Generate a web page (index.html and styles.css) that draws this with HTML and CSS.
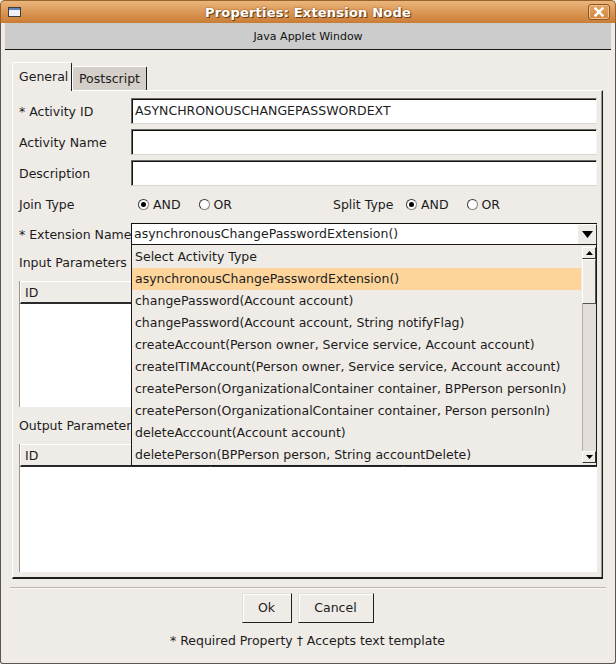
FILE: index.html
```html
<!DOCTYPE html>
<html>
<head>
<meta charset="utf-8">
<title>Properties: Extension Node</title>
<link rel="stylesheet" href="styles.css">
</head>
<body>
<div class="window">
  <div class="titlebar">
    <div class="tb-side tb-left"><span class="win-icon"></span></div>
    <div class="title">Properties: Extension Node</div>
    <div class="tb-side tb-right">
      <span class="close-btn">
        <svg width="10" height="10" viewBox="0 0 10 10"><path d="M1.5 1.5 L8.5 8.5 M8.5 1.5 L1.5 8.5" stroke="#fff" stroke-width="2.4" stroke-linecap="square"/></svg>
      </span>
    </div>
  </div>
  <div class="frame">
    <div class="applet-band">Java Applet Window</div>
    <div class="content">
      <div class="tabs">
        <div class="tab tab-active">General</div>
        <div class="tab tab-back">Postscript</div>
      </div>
      <div class="panel">
        <div class="row row-input">
          <div class="label">* Activity ID</div>
          <div class="input">ASYNCHRONOUSCHANGEPASSWORDEXT</div>
        </div>
        <div class="row row-input gap5">
          <div class="label">Activity Name</div>
          <div class="input"></div>
        </div>
        <div class="row row-input gap5">
          <div class="label">Description</div>
          <div class="input"></div>
        </div>
        <div class="row row-radio">
          <div class="label">Join Type</div>
          <div class="radio-group first-group">
            <span class="opt"><span class="radio on"></span><span class="opt-text">AND</span></span>
            <span class="opt"><span class="radio"></span><span class="opt-text">OR</span></span>
          </div>
          <div class="split-label">Split Type</div>
          <div class="radio-group">
            <span class="opt"><span class="radio on"></span><span class="opt-text">AND</span></span>
            <span class="opt"><span class="radio"></span><span class="opt-text">OR</span></span>
          </div>
        </div>
        <div class="row row-combo">
          <div class="label">* Extension Name</div>
          <div class="combo">
            <div class="combo-text">asynchronousChangePasswordExtension()</div>
            <div class="combo-btn">
              <svg width="11" height="7" viewBox="0 0 11 7"><polygon points="0,0 11,0 5.5,7" fill="#000"/></svg>
            </div>
            <div class="dropdown">
              <div class="dd-items">
                <div class="dd-item">Select Activity Type</div>
                <div class="dd-item selected">asynchronousChangePasswordExtension()</div>
                <div class="dd-item">changePassword(Account account)</div>
                <div class="dd-item">changePassword(Account account, String notifyFlag)</div>
                <div class="dd-item">createAccount(Person owner, Service service, Account account)</div>
                <div class="dd-item">createITIMAccount(Person owner, Service service, Account account)</div>
                <div class="dd-item">createPerson(OrganizationalContainer container, BPPerson personIn)</div>
                <div class="dd-item">createPerson(OrganizationalContainer container, Person personIn)</div>
                <div class="dd-item">deleteAcccount(Account account)</div>
                <div class="dd-item">deletePerson(BPPerson person, String accountDelete)</div>
              </div>
              <div class="scrollbar">
                <div class="sb-btn">
                  <svg width="7" height="4" viewBox="0 0 7 4"><polygon points="0,4 7,4 3.5,0" fill="#000"/></svg>
                </div>
                <div class="sb-thumb"></div>
                <div class="sb-track"></div>
                <div class="sb-btn">
                  <svg width="7" height="4" viewBox="0 0 7 4"><polygon points="0,0 7,0 3.5,4" fill="#000"/></svg>
                </div>
              </div>
            </div>
          </div>
        </div>
        <div class="section-label">Input Parameters</div>
        <div class="table">
          <div class="thead">
            <div class="th th1">ID</div>
            <div class="th th2"></div>
            <div class="th th3"></div>
          </div>
          <div class="tbody"></div>
        </div>
        <div class="section-label out-label">Output Parameters</div>
        <div class="table">
          <div class="thead">
            <div class="th th1">ID</div>
            <div class="th th2"></div>
            <div class="th th3"></div>
          </div>
          <div class="tbody tbody-out"></div>
        </div>
      </div>
      <div class="separator"></div>
      <div class="buttons">
        <div class="btn btn-ok">Ok</div>
        <div class="btn btn-cancel">Cancel</div>
      </div>
      <div class="footer">* Required Property † Accepts text template</div>
    </div>
  </div>
</div>
</body>
</html>
```
FILE: styles.css
```css
html, body {
  margin: 0;
  padding: 0;
}
body {
  width: 616px;
  height: 664px;
  overflow: hidden;
  background: #efebe7;
  font-family: "DejaVu Sans", "Liberation Sans", sans-serif;
  font-size: 12.5px;
  color: #1c1c1c;
}
.window {
  width: 616px;
  height: 664px;
  display: flex;
  flex-direction: column;
  background: #efebe7;
}

/* Title bar */
.titlebar {
  height: 23px;
  flex: none;
  display: flex;
  align-items: center;
  box-sizing: border-box;
  border: 1px solid #9a6128;
  border-bottom: none;
  border-radius: 5px 5px 0 0;
  background: linear-gradient(#eab67c 0%, #e0a062 35%, #d28a45 75%, #c97d37 100%);
}
.tb-side {
  width: 30px;
  flex: none;
  display: flex;
  align-items: center;
}
.tb-right {
  justify-content: flex-end;
}
.win-icon {
  margin-left: 7px;
  width: 13px;
  height: 10px;
  box-sizing: border-box;
  border: 1px solid #3e3e3e;
  background: #eef2f8;
  box-shadow: inset 0 2px 0 #5f82bb;
}
.title {
  flex: 1;
  text-align: center;
  font-weight: bold;
  font-size: 13px;
  color: #ffffff;
  text-shadow: 1px 1px 0 #6b3d12, 0 0 2px #8a5018;
  letter-spacing: 0.2px;
}
.close-btn {
  margin-right: 5px;
  width: 22px;
  height: 16px;
  box-sizing: border-box;
  border: 1px solid #8e5520;
  border-radius: 3px;
  background: linear-gradient(#e4a564, #cf8641);
  box-shadow: inset 0 0 0 1px #f0c08e;
  display: flex;
  align-items: center;
  justify-content: center;
}

/* Frame */
.frame {
  flex: 1;
  display: flex;
  flex-direction: column;
  border-left: 1px solid #5d5650;
  border-right: 1px solid #5d5650;
  border-bottom: 1px solid #5d5650;
  border-radius: 0 0 3px 3px;
  padding: 0 4px;
}
.applet-band {
  height: 26px;
  flex: none;
  background: #cccccc;
  border-bottom: 1px solid #151515;
  font-size: 11px;
  line-height: 27px;
  text-align: center;
  color: #111;
}
.content {
  flex: 1;
  display: flex;
  flex-direction: column;
  padding: 12px 8px 0 7px;
}

/* Tabs */
.tabs {
  display: flex;
  align-items: flex-end;
  height: 28px;
  flex: none;
}
.tab {
  box-sizing: border-box;
  border-top: 1px solid #ffffff;
  border-left: 1px solid #ffffff;
  border-right: 1px solid #1e1e1e;
  border-radius: 2px 2px 0 0;
}
.tab-active {
  width: 60px;
  height: 29px;
  margin-bottom: -1px;
  position: relative;
  z-index: 1;
  background: #efebe7;
  padding-left: 6px;
  line-height: 28px;
}
.tab-back {
  width: 75px;
  height: 24px;
  background: #d4cfc9;
  padding-left: 6px;
  line-height: 24px;
}

/* Panel */
.panel {
  height: 489px;
  flex: none;
  box-sizing: border-box;
  border-top: 1px solid #ffffff;
  border-left: 1px solid #ffffff;
  border-right: 1px solid #1e1e1e;
  border-bottom: 2px solid #1e1e1e;
  box-shadow: inset -1px 0 0 #9a958f;
  padding: 7px 5px 0 6px;
  display: flex;
  flex-direction: column;
}
.row {
  display: flex;
  align-items: center;
  flex: none;
}
.row-input {
  height: 26px;
}
.gap5 {
  margin-top: 5px;
}
.label {
  width: 112px;
  flex: none;
  white-space: nowrap;
}
.input {
  flex: 1;
  height: 26px;
  box-sizing: border-box;
  background: #ffffff;
  border: 1px solid;
  border-color: #6c6864 #f6f4f2 #d9d5d0 #6c6864;
  box-shadow: inset 1px 1px 0 #111;
  padding-left: 3px;
  line-height: 24px;
  white-space: nowrap;
}

/* Radios */
.row-radio {
  height: 22px;
  margin-top: 7px;
}
.radio-group {
  display: flex;
  align-items: center;
}
.first-group {
  width: 202px;
  flex: none;
  box-sizing: border-box;
  padding-left: 7px;
}
.split-label {
  width: 73px;
  flex: none;
}
.opt {
  display: flex;
  align-items: center;
}
.opt + .opt {
  margin-left: 18px;
}
.radio {
  width: 11px;
  height: 11px;
  box-sizing: border-box;
  border-radius: 50%;
  border: 1px solid #3a3a3a;
  border-right-color: #8a8580;
  border-bottom-color: #8a8580;
  background: #ffffff;
  display: flex;
  align-items: center;
  justify-content: center;
}
.radio.on::after {
  content: "";
  width: 5px;
  height: 5px;
  border-radius: 50%;
  background: #000;
}
.opt-text {
  margin-left: 4px;
}

/* Combo */
.row-combo {
  height: 22px;
  margin-top: 8px;
  position: relative;
  z-index: 5;
}
.combo {
  flex: 1;
  height: 22px;
  position: relative;
  display: flex;
  box-sizing: border-box;
  border-top: 1px solid #111;
  border-left: 1px solid #111;
  background: #ffffff;
}
.combo-text {
  flex: 1;
  padding-left: 2px;
  line-height: 20px;
  white-space: nowrap;
  overflow: hidden;
}
.combo-btn {
  width: 20px;
  flex: none;
  box-sizing: border-box;
  background: #efebe7;
  border-top: 1px solid #ffffff;
  border-left: 1px solid #ffffff;
  border-right: 1px solid #333;
  border-bottom: 1px solid #333;
  display: flex;
  align-items: center;
  justify-content: center;
}
.dropdown {
  position: absolute;
  top: 20px;
  left: -1px;
  right: 0;
  height: 222px;
  box-sizing: border-box;
  border: 1px solid #1a1a1a;
  background: #efebe7;
  display: flex;
  overflow: hidden;
}
.dd-items {
  flex: 1;
  padding-top: 1px;
  overflow: hidden;
}
.dd-item {
  height: 22px;
  line-height: 22px;
  padding-left: 3px;
  white-space: nowrap;
}
.dd-item.selected {
  background: #fdd59b;
}
.scrollbar {
  width: 14px;
  flex: none;
  margin: 2px 0 2px 1px;
  display: flex;
  flex-direction: column;
  background: #e2ded9;
}
.sb-btn {
  height: 12px;
  flex: none;
  box-sizing: border-box;
  background: #efebe7;
  border-top: 1px solid #fff;
  border-left: 1px solid #fff;
  border-right: 1px solid #333;
  border-bottom: 1px solid #333;
  display: flex;
  align-items: center;
  justify-content: center;
}
.sb-thumb {
  height: 45px;
  flex: none;
  box-sizing: border-box;
  background: #efebe7;
  border-top: 1px solid #fff;
  border-left: 1px solid #fff;
  border-right: 1px solid #555;
  border-bottom: 1px solid #555;
}
.sb-track {
  flex: 1;
  border-left: 1px solid #b5b0aa;
}

/* Tables */
.section-label {
  height: 20px;
  line-height: 20px;
  margin-top: 8px;
  white-space: nowrap;
  flex: none;
}
.out-label {
  margin-top: 9px;
}
.table {
  margin-top: 8px;
  flex: none;
  border-left: 1px solid #9a958f;
  display: flex;
  flex-direction: column;
}
.thead {
  display: flex;
  height: 23px;
}
.th {
  box-sizing: border-box;
  height: 23px;
  background: #efebe7;
  border-top: 1px solid #ffffff;
  border-left: 1px solid #ffffff;
  border-right: 1px solid #2a2a2a;
  border-bottom: 2px solid #2a2a2a;
  padding-left: 4px;
  line-height: 21px;
}
.th1 {
  width: 190px;
}
.th2 {
  width: 193px;
}
.th3 {
  flex: 1;
}
.tbody {
  height: 103px;
  background: #ffffff;
}
.tbody-out {
  height: 105px;
}

/* Bottom */
.separator {
  height: 1px;
  margin: 8px -3px 0 -2px;
  background: #bdb6ae;
  border-bottom: 1px solid #faf8f6;
  flex: none;
}
.buttons {
  display: flex;
  justify-content: center;
  margin-top: 4px;
  flex: none;
}
.btn {
  height: 30px;
  box-sizing: border-box;
  background: #efebe7;
  border-top: 1px solid #e0dcd7;
  border-left: 1px solid #e0dcd7;
  border-right: 1px solid #1e1e1e;
  border-bottom: 1px solid #1e1e1e;
  box-shadow: inset 1px 1px 0 #ffffff;
  text-align: center;
  line-height: 28px;
}
.btn-ok {
  width: 50px;
}
.btn-cancel {
  width: 76px;
  margin-left: 6px;
}
.footer {
  margin-top: 9px;
  height: 18px;
  line-height: 18px;
  text-align: center;
  white-space: nowrap;
  flex: none;
}
```
